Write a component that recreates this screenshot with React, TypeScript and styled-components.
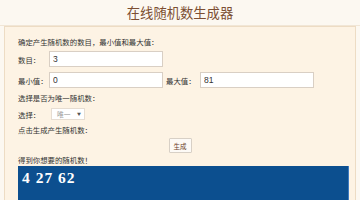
import {FC} from 'react'
import styled, {createGlobalStyle} from 'styled-components'

const GlobalStyle = createGlobalStyle`
  html, body {
    margin: 0;
    padding: 0;
    width: 360px;
    height: 200px;
    overflow: hidden;
    background: #fcf8f1;
    font-family: "Noto Sans CJK SC", "Liberation Sans", sans-serif;
  }
`

const App: FC = () => {
  return (
    <Page>
      <GlobalStyle />
      <Header>
        <Title>在线随机数生成器</Title>
      </Header>
      <Panel>
        <Line>确定产生随机数的数目，最小值和最大值：</Line>
        <FieldRow $mt={4}>
          <Label>数目：</Label>
          <Input defaultValue="3" />
        </FieldRow>
        <FieldRow $mt={5}>
          <Label>最小值：</Label>
          <Input defaultValue="0" />
          <Label $ml={3} $w={34}>最大值：</Label>
          <Input defaultValue="81" />
        </FieldRow>
        <Line $mt={5}>选择是否为唯一随机数：</Line>
        <SelectRow>
          <Label $w={32}>选择：</Label>
          <FakeSelect>
            <span>唯一</span>
            <Arrow>▼</Arrow>
          </FakeSelect>
        </SelectRow>
        <Line $mt={5}>点击生成产生随机数：</Line>
        <ButtonRow>
          <GenerateButton>生成</GenerateButton>
        </ButtonRow>
        <Line $mt={2}>得到你想要的随机数！</Line>
        <ResultBox>4 27 62</ResultBox>
      </Panel>
    </Page>
  )
}

const Page = styled.div`
  width: 360px;
  height: 200px;
  display: flex;
  flex-direction: column;
  overflow: hidden;
`

const Header = styled.div`
  height: 33px;
  display: flex;
  align-items: center;
  justify-content: center;
  border-bottom: 1px solid #f1e6d6;
`

const Title = styled.h1`
  margin: 0;
  font-size: 13.3px;
  font-weight: normal;
  color: #7c4f33;
  letter-spacing: 0;
  transform: translateX(0);
`

const Panel = styled.div`
  margin: 0 4px;
  flex: 1;
  background: #fdf3e4;
  border: 1px solid #eddcc4;
  border-bottom: none;
  padding: 10px 8px 0 13px;
  display: flex;
  flex-direction: column;
`

const Line = styled.div<{$mt?: number}>`
  margin-top: ${p => p.$mt ?? 0}px;
  height: 10px;
  line-height: 10px;
  font-size: 7.4px;
  color: #333;
  white-space: nowrap;
`

const FieldRow = styled.div<{$mt: number}>`
  margin-top: ${p => p.$mt}px;
  height: 16px;
  display: flex;
  align-items: center;
`

const Label = styled.span<{$w?: number; $ml?: number}>`
  width: ${p => p.$w ?? 31}px;
  margin-left: ${p => p.$ml ?? 0}px;
  flex-shrink: 0;
  font-size: 7.4px;
  color: #333;
  white-space: nowrap;
`

const Input = styled.input`
  box-sizing: border-box;
  width: 114px;
  height: 16px;
  margin: 0;
  padding: 0 3px;
  border: 1px solid #d9cfc4;
  background: #fff;
  font-family: "Liberation Sans", sans-serif;
  font-size: 8.5px;
  color: #333;
  outline: none;
`

const SelectRow = styled.div`
  margin-top: 5px;
  height: 12px;
  display: flex;
  align-items: center;
`

const FakeSelect = styled.div`
  box-sizing: border-box;
  width: 34px;
  height: 12px;
  margin-left: 1px;
  padding: 0 3px 0 5px;
  border: 1px solid #e6ddd2;
  background: #fff;
  display: flex;
  align-items: center;
  justify-content: space-between;
  font-size: 6.8px;
  color: #999;
`

const Arrow = styled.span`
  font-size: 4px;
  color: #555;
`

const ButtonRow = styled.div`
  margin-top: 3px;
  height: 15px;
  display: flex;
  justify-content: center;
  padding-right: 5px;
`

const GenerateButton = styled.button`
  box-sizing: border-box;
  width: 23px;
  height: 15px;
  padding: 0;
  border: 1px solid #d8d0c6;
  border-radius: 1px;
  background: #fdfaf6;
  font-family: "Noto Sans CJK SC", sans-serif;
  font-size: 6.5px;
  color: #6b3e2a;
`

const ResultBox = styled.div`
  margin-top: 1px;
  width: 331px;
  height: 34px;
  box-sizing: border-box;
  background: #0c4f8f;
  border-right: 1px solid #3f7bc0;
  padding: 2px 4px;
  font-family: "Liberation Serif", serif;
  font-weight: bold;
  font-size: 15.5px;
  letter-spacing: 1px;
  line-height: 20px;
  color: #fff;
`

export default App
